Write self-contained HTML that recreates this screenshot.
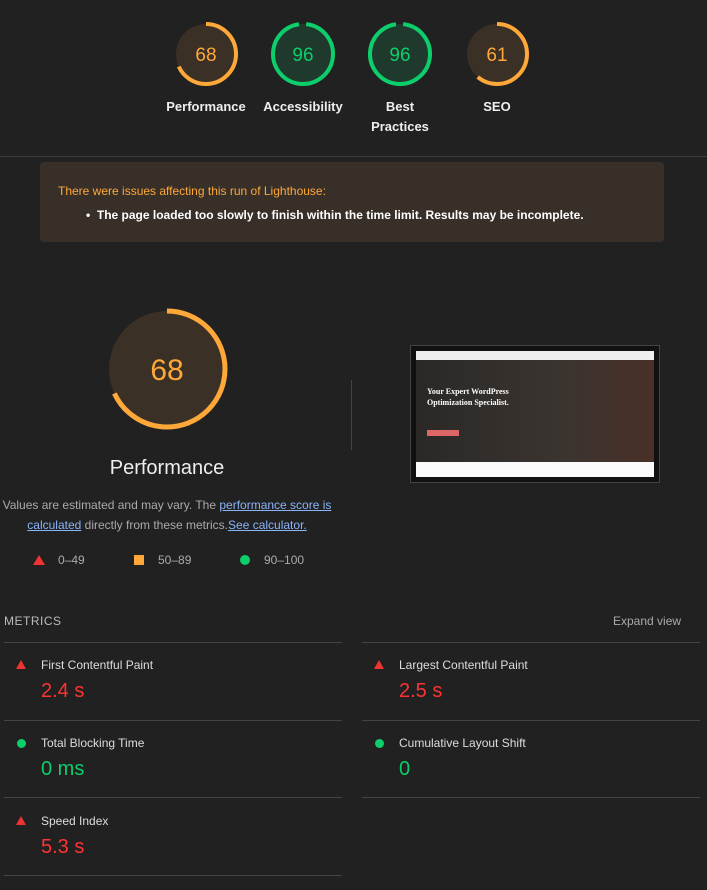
<!DOCTYPE html><html><head><style>
body{margin:0;background:#212121;width:707px;height:890px;overflow:hidden;font-family:"Liberation Sans",sans-serif;color:#e8e8e8;position:relative}
.a{position:absolute}
.lbl{position:absolute;width:100px;text-align:center;font-size:13px;font-weight:bold;color:#eee;line-height:20px}
.hr{position:absolute;height:1px;background:#444}
.mt{position:absolute;font-size:12px;color:#ddd}
.mv{position:absolute;font-size:20px}
</style></head><body>
<svg class="a" style="left:0;top:0" width="707" height="480">
<g font-family="Liberation Sans" font-size="19" text-anchor="middle">
<circle cx="206" cy="54" r="30" fill="#3a3025"/><circle cx="206" cy="54" r="30" fill="none" stroke="#ffa83a" stroke-width="4" stroke-dasharray="128.2 200" transform="rotate(-90 206 54)"/><text x="206" y="61" fill="#ffa83a">68</text>
<circle cx="303" cy="54" r="30" fill="#1f3a2c"/><circle cx="303" cy="54" r="30" fill="none" stroke="#0cce6b" stroke-width="4" stroke-dasharray="181 200" transform="rotate(-84 303 54)"/><text x="303" y="61" fill="#0cce6b">96</text>
<circle cx="400" cy="54" r="30" fill="#1f3a2c"/><circle cx="400" cy="54" r="30" fill="none" stroke="#0cce6b" stroke-width="4" stroke-dasharray="181 200" transform="rotate(-84 400 54)"/><text x="400" y="61" fill="#0cce6b">96</text>
<circle cx="497" cy="54" r="30" fill="#3a3025"/><circle cx="497" cy="54" r="30" fill="none" stroke="#ffa83a" stroke-width="4" stroke-dasharray="115 200" transform="rotate(-90 497 54)"/><text x="497" y="61" fill="#ffa83a">61</text>
<circle cx="167" cy="369" r="58" fill="#3a3025"/><circle cx="167" cy="369" r="58" fill="none" stroke="#ffa83a" stroke-width="5" stroke-dasharray="247.8 400" transform="rotate(-90 167 369)"/><text x="167" y="380" fill="#ffa83a" font-size="30">68</text>
</g></svg>
<div class="lbl" style="left:156px;top:97px">Performance</div>
<div class="lbl" style="left:253px;top:97px">Accessibility</div>
<div class="lbl" style="left:350px;top:97px">Best<br>Practices</div>
<div class="lbl" style="left:447px;top:97px">SEO</div>
<div class="hr" style="left:0;top:156px;width:707px;background:#3c3c3c"></div>
<div class="a" style="left:40px;top:162px;width:624px;height:80px;background:#372f28;border-radius:4px"></div>
<div class="a" style="left:58px;top:184px;font-size:12px;color:#ffa83a">There were issues affecting this run of Lighthouse:</div>
<div class="a" style="left:86px;top:208px;font-size:12px;font-weight:bold;color:#fff">•&nbsp;&nbsp;The page loaded too slowly to finish within the time limit. Results may be incomplete.</div>
<div class="a" style="left:67px;top:457px;width:200px;text-align:center;font-size:20px;color:#eee">Performance</div>
<div class="a" style="left:0;top:495px;width:334px;text-align:center;font-size:12px;line-height:20px;color:#aaa">Values are estimated and may vary. The <u style="color:#8ab4f8">performance score is calculated</u> directly from these metrics.<u style="color:#8ab4f8">See calculator.</u></div>
<div class="a" style="left:33px;top:555px;width:0;height:0;border-left:6px solid transparent;border-right:6px solid transparent;border-bottom:10px solid #e33"></div>
<div class="a" style="left:58px;top:553px;font-size:12px;color:#aaa">0–49</div>
<div class="a" style="left:134px;top:555px;width:10px;height:10px;background:#ffa83a"></div>
<div class="a" style="left:158px;top:553px;font-size:12px;color:#aaa">50–89</div>
<div class="a" style="left:240px;top:555px;width:10px;height:10px;border-radius:50%;background:#0cce6b"></div>
<div class="a" style="left:264px;top:553px;font-size:12px;color:#aaa">90–100</div>
<div class="a" style="left:351px;top:380px;width:1px;height:70px;background:#444"></div>
<div class="a" style="left:410px;top:345px;width:250px;height:138px;background:#111;border:1px solid #444;box-sizing:border-box">
<div class="a" style="left:5px;top:5px;width:238px;height:9px;background:#eee"></div>
<div class="a" style="left:5px;top:14px;width:238px;height:102px;background:linear-gradient(90deg,#2a2826,#3a3430 60%,#4a3028)"></div>
<div class="a" style="left:16px;top:40px;font-size:8px;font-weight:bold;color:#fff;font-family:'Liberation Serif',serif;line-height:11px">Your Expert WordPress<br>Optimization Specialist.</div>
<div class="a" style="left:16px;top:84px;width:32px;height:6px;background:#d66"></div>
<div class="a" style="left:5px;top:116px;width:238px;height:15px;background:#fafafa"></div>
</div>
<div class="a" style="left:4px;top:614px;font-size:12px;letter-spacing:.5px;color:#bbb">METRICS</div>
<div class="a" style="left:613px;top:614px;font-size:12px;color:#aaa">Expand view</div>
<div class="hr" style="left:4px;top:642px;width:338px"></div><div class="hr" style="left:362px;top:642px;width:338px"></div>
<div class="hr" style="left:4px;top:720px;width:338px"></div><div class="hr" style="left:362px;top:720px;width:338px"></div>
<div class="hr" style="left:4px;top:797px;width:338px"></div><div class="hr" style="left:362px;top:797px;width:338px"></div>
<div class="hr" style="left:4px;top:875px;width:338px"></div>
<div class="a" style="left:16px;top:660px;border-left:5px solid transparent;border-right:5px solid transparent;border-bottom:9px solid #e33"></div>
<div class="mt" style="left:41px;top:658px">First Contentful Paint</div><div class="mv" style="left:41px;top:680px;color:#f33">2.4 s</div>
<div class="a" style="left:374px;top:660px;border-left:5px solid transparent;border-right:5px solid transparent;border-bottom:9px solid #e33"></div>
<div class="mt" style="left:399px;top:658px">Largest Contentful Paint</div><div class="mv" style="left:399px;top:680px;color:#f33">2.5 s</div>
<div class="a" style="left:17px;top:739px;width:9px;height:9px;border-radius:50%;background:#0cce6b"></div>
<div class="mt" style="left:41px;top:736px">Total Blocking Time</div><div class="mv" style="left:41px;top:758px;color:#0cce6b">0 ms</div>
<div class="a" style="left:375px;top:739px;width:9px;height:9px;border-radius:50%;background:#0cce6b"></div>
<div class="mt" style="left:399px;top:736px">Cumulative Layout Shift</div><div class="mv" style="left:399px;top:758px;color:#0cce6b">0</div>
<div class="a" style="left:16px;top:816px;border-left:5px solid transparent;border-right:5px solid transparent;border-bottom:9px solid #e33"></div>
<div class="mt" style="left:41px;top:814px">Speed Index</div><div class="mv" style="left:41px;top:836px;color:#f33">5.3 s</div>
</body></html>
